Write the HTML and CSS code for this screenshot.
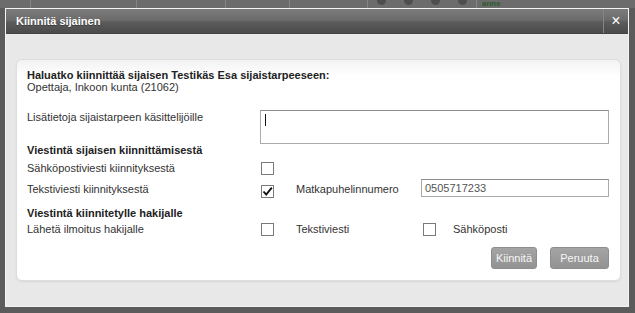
FILE: index.html
```html
<!DOCTYPE html>
<html lang="fi">
<head>
  <meta charset="UTF-8">
  <title>Kiinnitä sijainen</title>
  <link rel="stylesheet" href="styles.css">
</head>
<body>

  <!-- dimmed page behind the modal -->
  <div class="page-strip">
    <div class="cell" style="width: 31px;"></div>
    <div class="cell" style="width: 106px;"></div>
    <div class="cell" style="width: 89px;"></div>
    <div class="cell" style="width: 64px;"></div>
    <div class="cell" style="width: 78px;"></div>
    <div class="cell cell-dots" style="width: 109px;">
      <span class="dot"></span><span class="dot"></span><span class="dot"></span><span class="dot"></span>
    </div>
    <div class="cell cell-name">anne</div>
  </div>

  <div class="dialog">
    <div class="dialog-title">
      <span class="dialog-caption">Kiinnitä sijainen</span>
      <span class="dialog-close">&#215;</span>
    </div>

    <div class="dialog-body">
      <div class="panel">
        <p class="question">
          <b>Haluatko kiinnittää sijaisen Testikäs Esa sijaistarpeeseen:</b><br>
          Opettaja, Inkoon kunta (21062)
        </p>

        <div class="row row-notes">
          <span class="label">Lisätietoja sijaistarpeen käsittelijöille</span>
          <div class="textbox"><span class="caret"></span></div>
        </div>

        <div class="heading">Viestintä sijaisen kiinnittämisestä</div>
        <div class="row row-small row-first">
          <span class="label">Sähköpostiviesti kiinnityksestä</span>
          <span class="check"></span>
        </div>
        <div class="row row-phone">
          <span class="label">Tekstiviesti kiinnityksestä</span>
          <span class="check">
            <svg width="11" height="11" viewBox="0 0 11 11"><path d="M1.5 5.5 L4.2 8.6 L9.8 1.6" fill="none" stroke="#111" stroke-width="1.9"/></svg>
          </span>
          <span class="label">Matkapuhelinnumero</span>
          <div class="input">0505717233</div>
        </div>

        <div class="heading heading-second">Viestintä kiinnitetylle hakijalle</div>
        <div class="row row-small">
          <span class="label">Lähetä ilmoitus hakijalle</span>
          <span class="check"></span>
          <span class="label">Tekstiviesti</span>
          <span class="option"><span class="check"></span><span class="label">Sähköposti</span></span>
        </div>

        <div class="actions">
          <button class="btn btn-pin">Kiinnitä</button>
          <button class="btn btn-cancel">Peruuta</button>
        </div>
      </div>
    </div>
  </div>

</body>
</html>
```

FILE: styles.css
```css
* {
  box-sizing: border-box;
}

html, body {
  margin: 0;
  height: 100%;
}

body {
  background: #5b5b5b;
  font-family: "Liberation Sans", Arial, sans-serif;
  font-size: 11px;
  color: #333;
  overflow: hidden;
}

/* page behind the overlay */
.page-strip {
  display: flex;
  height: 8px;
  overflow: hidden;
  background: #6c6c6c;
}

.cell {
  height: 100%;
  border-right: 1px solid #858585;
}

.cell-dots {
  display: flex;
  gap: 18px;
  padding-left: 9px;
}

.dot {
  width: 9px;
  height: 9px;
  margin-top: -4px;
  border-radius: 50%;
  background: #4e4e4e;
}

.cell-name {
  flex: 1;
  border: none;
  padding-left: 5px;
  font-weight: bold;
  font-size: 8px;
  line-height: 8px;
  color: #2c5a2c;
}

/* modal */
.dialog {
  width: 624px;
  height: 299px;
  margin-left: 5px;
  border: 1px solid #f4f4f4;
  background: #e8e8e8;
  display: flex;
  flex-direction: column;
}

.dialog-title {
  display: flex;
  align-items: stretch;
  height: 25px;
  background: linear-gradient(#7b7b7b, #6c6c6c 45%, #5b5b5b 55%, #4b4b4b);
  border-bottom: 1px solid #444;
}

.dialog-caption {
  flex: 1;
  padding-left: 10px;
  line-height: 24px;
  font-size: 11px;
  font-weight: bold;
  color: #fff;
  text-shadow: 0 1px 0 #3c3c3c;
}

.dialog-close {
  width: 25px;
  border-left: 1px solid #858585;
  text-align: center;
  line-height: 23px;
  font-size: 16px;
  color: #fff;
}

.dialog-body {
  flex: 1;
  padding: 25px 7px 26px 10px;
}

.panel {
  height: 100%;
  padding: 9px 11px 11px 10px;
  background: linear-gradient(#f2f2f2, #fff 16px);
  border: 1px solid #dedede;
  border-radius: 6px;
  box-shadow: 0 1px 2px rgba(0, 0, 0, 0.08);
}

.question {
  margin: 0;
  line-height: 12px;
  color: #333;
}

.question b {
  color: #222;
}

.row {
  display: grid;
  grid-template-columns: 234px 35px 125px 1fr;
  align-items: center;
}

.row .label {
  line-height: 13px;
}

.row-notes {
  margin-top: 17px;
  grid-template-columns: 233px 1fr;
  align-items: start;
  height: 34px;
}

.row-notes .label {
  margin-top: 1px;
}

.row-small {
  height: 18px;
}

.row-first {
  margin-top: 2px;
}

.row-phone {
  height: 22px;
}

.heading {
  font-weight: bold;
  line-height: 13px;
  color: #222;
}

.heading-second {
  margin-top: 8px;
}

.textbox {
  height: 34px;
  padding: 3px 4px;
  border: 1px solid #ababab;
  border-top-color: #8c8c8c;
  background: #fff;
}

.caret {
  display: block;
  width: 1px;
  height: 12px;
  background: #111;
}

.check {
  display: flex;
  align-items: center;
  justify-content: center;
  width: 13px;
  height: 13px;
  border: 1px solid #7a7a7a;
  background: #fff;
}

.row-phone .check {
  margin-top: 6px;
}

.row-phone .label {
  margin-top: 3px;
}

.input {
  height: 18px;
  padding: 0 3px;
  line-height: 16px;
  border: 1px solid #ababab;
  border-top-color: #8c8c8c;
  background: #fff;
  color: #555;
}

.option {
  display: flex;
  align-items: center;
  gap: 17px;
  padding-left: 2px;
}

.actions {
  display: flex;
  justify-content: flex-end;
  gap: 13px;
  margin-top: 9px;
}

.btn {
  height: 22px;
  padding: 0;
  border: 1px solid #8d8d8d;
  border-radius: 3px;
  background: linear-gradient(#a4a4a4, #939393);
  font-family: "Liberation Sans", Arial, sans-serif;
  font-size: 11px;
  color: #f6f6f6;
}

.btn-pin {
  width: 46px;
}

.btn-cancel {
  width: 59px;
}
```
